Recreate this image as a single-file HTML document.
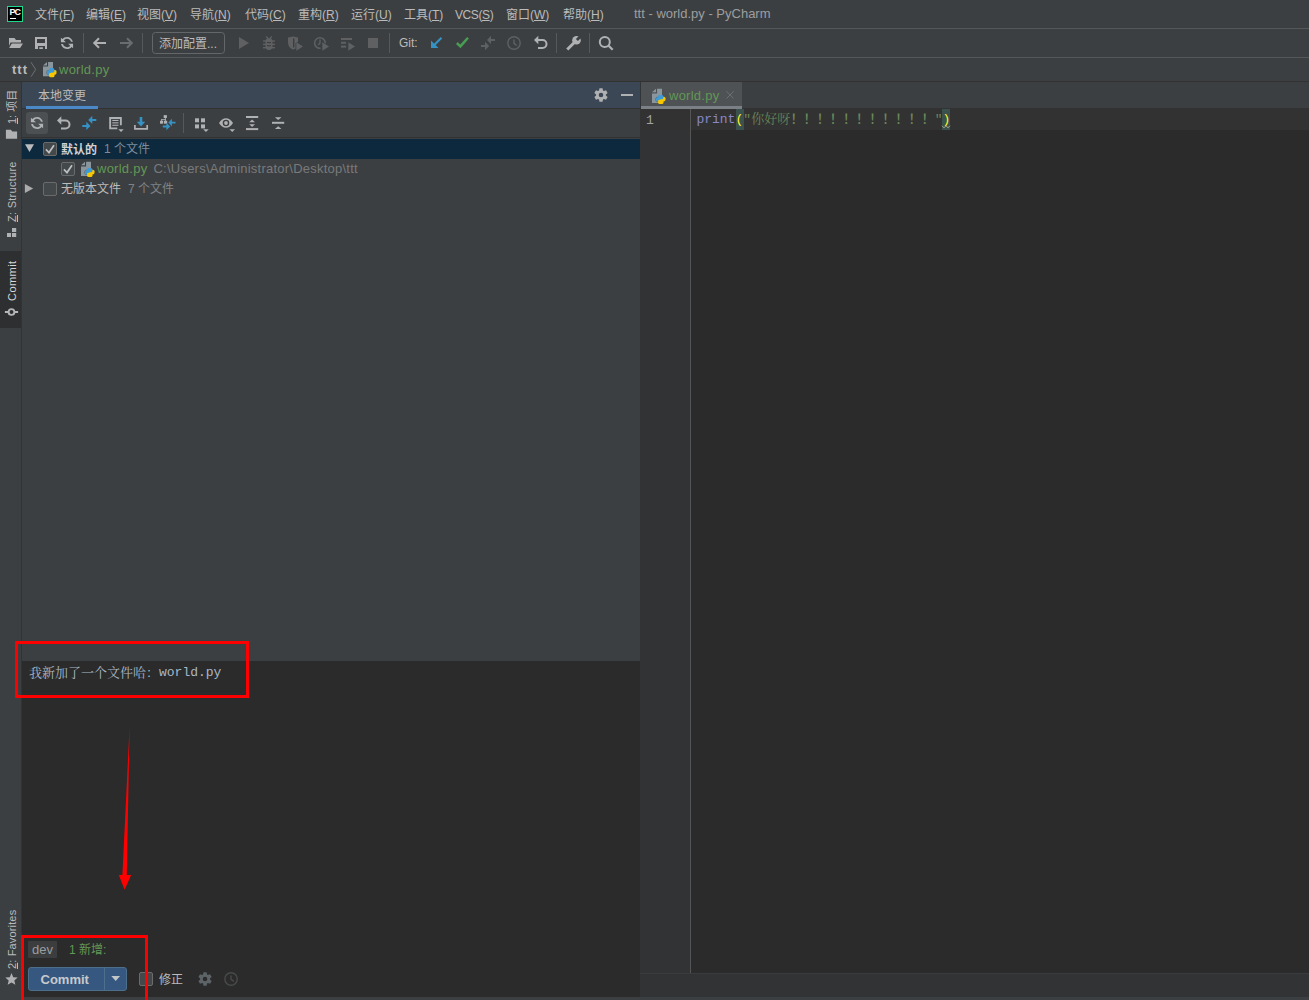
<!DOCTYPE html>
<html lang="zh">
<head>
<meta charset="utf-8">
<title>ttt - world.py - PyCharm</title>
<style>
*{box-sizing:border-box;margin:0;padding:0}
html,body{width:1309px;height:1000px;overflow:hidden;background:#3c3f41}
body{position:relative;font-family:"Liberation Sans","Noto Sans CJK SC",sans-serif;font-size:12px;color:#bbbbbb;line-height:1}
.abs{position:absolute}
.t{position:absolute;white-space:nowrap;line-height:16px;height:16px}
.hl{position:absolute;left:0;width:1309px;height:1px}
.vl{position:absolute;width:1px;background:#555759}
svg{position:absolute;overflow:visible}
u{text-decoration:underline;text-underline-offset:1px}
.vt u{text-underline-offset:1px}
.mono{font-family:"Liberation Mono","Noto Serif CJK SC",monospace}
.g{color:#629755}
.dim{color:#7f8385}
.vt{position:absolute;white-space:nowrap;transform-origin:0 0;transform:rotate(-90deg);line-height:14px;height:14px;font-size:11px;color:#bbbbbb}
.cb{position:absolute;width:14px;height:14px;border:1px solid #6b6b6b;background:#43494a;border-radius:2px}
</style>
</head>
<body>
<svg width="0" height="0" style="left:0;top:0"><defs>
<symbol id="py" viewBox="0 0 14 16" overflow="visible">
<path fill="#8a969e" d="M4 0v3.500h-4z M5.100 0h4.900v14.200h-10v-9.600h5.100z"/>
<g stroke="#3a3e40" stroke-width=".6" paint-order="stroke">
<rect fill="#3d9bd6" x="3.900" y="8.500" width="4.800" height="4.200" rx="1.500"/>
<rect fill="#f8c700" x="9" y="8" width="4.500" height="4.500" rx="1.500"/>
</g>
<rect fill="#3d9bd6" x="6" y="6.100" width="5.400" height="4.700" rx="1.600"/>
<rect fill="#f8c700" x="6.100" y="10.700" width="5.400" height="4.600" rx="1.600"/>
<rect fill="#3d9bd6" x="5" y="8.700" width="4.500" height="2.100"/>
<rect fill="#f8c700" x="8" y="10.700" width="4.500" height="1.700"/>
</symbol>
</defs></svg>
<!-- ===== menu bar ===== -->
<div id="menubar" class="abs" style="left:0;top:0;width:1309px;height:28px">
<div class="abs" style="left:7px;top:6px;width:16px;height:16px;background:#000;border:1px solid #21d789"></div>
<div class="t" style="left:9.500px;top:7px;font-size:9px;font-weight:bold;color:#fff;line-height:10px;height:10px;letter-spacing:-.9px">PC</div>
<div class="abs" style="left:10px;top:18px;width:6px;height:1px;background:#fff"></div>
<div class="t m" style="left:35px;top:7px">文件(<u>F</u>)</div>
<div class="t m" style="left:86px;top:7px">编辑(<u>E</u>)</div>
<div class="t m" style="left:137px;top:7px">视图(<u>V</u>)</div>
<div class="t m" style="left:190px;top:7px">导航(<u>N</u>)</div>
<div class="t m" style="left:245px;top:7px">代码(<u>C</u>)</div>
<div class="t m" style="left:298px;top:7px">重构(<u>R</u>)</div>
<div class="t m" style="left:351px;top:7px">运行(<u>U</u>)</div>
<div class="t m" style="left:404px;top:7px">工具(<u>T</u>)</div>
<div class="t m" style="left:455px;top:7px;letter-spacing:-.4px">VCS(<u>S</u>)</div>
<div class="t m" style="left:506px;top:7px">窗口(<u>W</u>)</div>
<div class="t m" style="left:563px;top:7px">帮助(<u>H</u>)</div>
<div class="t" style="left:634px;top:6px;color:#9c9ea0;font-size:13px">ttt - world.py - PyCharm</div>
</div>
<div class="hl" style="top:28px;background:#555759"></div>
<!-- ===== toolbar ===== -->
<div id="toolbar" class="abs" style="left:0;top:29px;width:1309px;height:28px">
<svg style="left:0;top:0" width="1309" height="28" viewBox="0 29 1309 28">
<!-- open folder -->
<path fill="#afb1b3" d="M9 38h5.5l1.5 2h5v2.5h-10.5l-1.5 3.5z M11.8 43.6h11.2l-2.9 4.4h-11z"/>
<!-- save -->
<path fill="#afb1b3" fill-rule="evenodd" d="M35 37h12v12h-12z M37 39v4h8v-4z M38 46v3h7v-3z M39.3 47.2h3.6v1.8h-3.6z"/>
<!-- refresh -->
<g transform="translate(59,35)"><path fill="#afb1b3" d="M12.57 11.89C11.47 13.18 9.83 14 8 14 5.04 14 2.58 11.86 2.09 9.04l1.86.07C4.43 10.89 6.06 12.2 8 12.2c1.3 0 2.46-.59 3.23-1.52L9.05 8.71h5.04v4.54z M3.43 4.12C4.53 2.82 6.17 2 8 2c2.92 0 5.35 2.09 5.89 4.85l-1.87-.06C11.5 5.06 9.9 3.8 8 3.8c-1.3 0-2.46.59-3.23 1.52L6.95 7.29H1.91V2.75z"/></g>
<!-- separators -->
<g fill="#56595b"><rect x="83" y="33" width="1" height="20"/><rect x="142" y="33" width="1" height="20"/><rect x="389" y="33" width="1" height="20"/><rect x="556" y="33" width="1" height="20"/><rect x="589" y="33" width="1" height="20"/></g>
<!-- back / forward -->
<path fill="none" stroke="#afb1b3" stroke-width="2" d="M99 38.2l-4.8 4.8 4.8 4.8M94.5 43h11.5"/>
<path fill="none" stroke="#6a6d6f" stroke-width="2" d="M127 38.2l4.8 4.8-4.8 4.8M131.500 43h-11.5"/>
<!-- run config button -->
<rect x="152.500" y="32.500" width="72" height="21" rx="3" fill="none" stroke="#646769"/>
<!-- play -->
<path fill="#5e6062" d="M239 37l10 6-10 6z"/>
<!-- bug -->
<g fill="#5e6062"><rect x="265.500" y="38.300" width="7" height="11.600" rx="3.400"/><path d="M265.600 36.800l1-.8 2.300 2.600-1 .8z M272.400 36.800l-1-.8-2.300 2.600 1 .8z"/><rect x="263" y="40.300" width="12" height="1.400"/><rect x="263" y="43.700" width="12" height="1.400"/><rect x="263" y="47" width="12" height="1.400"/></g>
<g fill="#3c3f41"><rect x="267" y="42" width="4" height="1.100"/><rect x="267" y="45.200" width="4" height="1.100"/></g>
<!-- coverage -->
<path fill="#5e6062" fill-rule="evenodd" d="M288 37.500l5-1 5 1v4.200l-2.500 1.500v5.300c-1 .6-1.700.9-2.500 1.100c-3-1-5-3.500-5-7z M293 38.300v9.400c.6-.2 1-.4 1.400-.7v-8.400z"/>
<path fill="#5e6062" d="M296.300 42.300l6.700 4.200-6.700 4.300z"/>
<!-- profile -->
<path fill="none" stroke="#5e6062" stroke-width="1.500" d="M320.500 48.300a5.300 5.300 0 1 1 4.700-5"/>
<path fill="none" stroke="#5e6062" stroke-width="1.300" d="M320 39.500v3.500l-1.800 2"/>
<path fill="#5e6062" d="M322.300 42.300l6.700 4.200-6.700 4.300z"/>
<!-- run list -->
<g fill="#5e6062"><rect x="341" y="38" width="11" height="2"/><rect x="341" y="41.800" width="5" height="2"/><rect x="341" y="45.600" width="5" height="2"/><path d="M348.300 42.300l6.700 4.200-6.700 4.300z"/></g>
<!-- stop -->
<rect x="368" y="38" width="10" height="10" fill="#5e6062"/>
<!-- git update (blue arrow) -->
<path fill="none" stroke="#3592c4" stroke-width="2" d="M441.500 37.700l-9.300 9.300"/><path fill="#3592c4" d="M431 40.500v7.500h7.500z"/>
<!-- git commit (check) -->
<path fill="none" stroke="#499c54" stroke-width="2.500" d="M456.900 43l3.500 3.400 7.600-8.700"/>
<!-- diff disabled -->
<path fill="#5e6062" d="M487 40l4-4.200v3.200h4v2h-4v3.200z M489.200 46l-4.200-4.200v3.200h-4v2h4v3.200z"/>
<!-- history disabled -->
<circle cx="514" cy="43" r="6.200" fill="none" stroke="#5e6062" stroke-width="1.400"/><path fill="none" stroke="#5e6062" stroke-width="1.400" d="M514 39.500v3.800l2.700 2.200"/>
<!-- rollback -->
<path fill="none" stroke="#afb1b3" stroke-width="2" d="M538 40h4.500a4 4 0 0 1 0 8h-4.500"/><path fill="#afb1b3" d="M534 40l4.300-4.200v8.400z"/>
<!-- wrench -->
<path stroke="#afb1b3" stroke-width="3" stroke-linecap="square" d="M568.300 48.500l6-6"/><circle cx="576.500" cy="40.300" r="4.300" fill="#afb1b3"/><path fill="#3c3f41" d="M575.900 38.900l2 2 4-4-2-2z"/>
<!-- search -->
<circle cx="604.800" cy="41.900" r="5" fill="none" stroke="#afb1b3" stroke-width="2"/><path stroke="#afb1b3" stroke-width="2.200" d="M608.400 45.500l4.300 4.300"/>
</svg>
<div class="t" style="left:159px;top:7px">添加配置...</div>
<div class="t" style="left:399px;top:6px">Git:</div>
</div>
<div class="hl" style="top:57px;background:#555759"></div>
<!-- ===== nav bar ===== -->
<div id="navbar" class="abs" style="left:0;top:58px;width:1309px;height:23px">
<div class="t" style="left:12px;top:4px;font-weight:bold;font-size:13px;letter-spacing:1px">ttt</div>
<svg style="left:0;top:0" width="120" height="23" viewBox="0 58 120 23"><path fill="none" stroke="#6e7173" stroke-width="1" d="M31 62.300l4.700 7.200-4.700 7.200"/><use href="#py" x="43" y="62" width="14" height="16"/></svg>
<div class="t g" style="left:59px;top:4px;font-size:13px;letter-spacing:.25px">world.py</div>
</div>
<div class="hl" style="top:81px;background:#323232"></div>
<!-- ===== left strip ===== -->
<div id="strip" class="abs" style="left:0;top:82px;width:21px;height:915px">
<div class="vt" style="left:5px;top:42px"><u>1</u>: 项目</div>
<div class="vt" style="left:5px;top:140px;letter-spacing:.27px"><u>Z</u>: Structure</div>
<div class="abs" style="left:0;top:169px;width:21px;height:77px;background:#2d2f30"></div>
<div class="vt" style="left:5px;top:219px;letter-spacing:.45px;color:#d6d6d6">Commit</div>
<div class="vt" style="left:5px;top:887px;letter-spacing:.15px"><u>2</u>: Favorites</div>
<svg style="left:0;top:0" width="21" height="915" viewBox="0 82 21 915">
<path fill="#afb1b3" d="M5.900 129.800h5l1.400 1.800h4.800v7.200h-11.200z"/>
<g fill="#afb1b3"><rect x="12" y="228" width="4.200" height="4"/><rect x="7" y="233" width="4" height="4"/><rect x="12" y="233" width="4.200" height="4"/></g>
<circle cx="11.500" cy="312" r="2.900" fill="none" stroke="#b4b6b8" stroke-width="1.900"/><path stroke="#b4b6b8" stroke-width="1.900" d="M4.900 312h3.600M14.500 312h3.600"/>
<path fill="#afb1b3" d="M11.500 973l1.750 4.200 4.450.35-3.400 2.900 1.050 4.350-3.850-2.350-3.850 2.350 1.050-4.350-3.400-2.900 4.450-.35z"/>
</svg>
</div>
<div class="abs" style="left:21px;top:82px;width:1px;height:915px;background:#313436"></div>
<!-- ===== commit tool window ===== -->
<div id="tw" class="abs" style="left:22px;top:82px;width:618px;height:915px">
<!-- header -->
<div class="abs" style="left:0;top:0;width:618px;height:26px;background:#3b4754"></div>
<div class="abs" style="left:0;top:26px;width:618px;height:1px;background:#323232"></div>
<div class="abs" style="left:4px;top:24px;width:72px;height:3px;background:#4a88c7"></div>
<div class="t" style="left:16px;top:6px">本地变更</div>
<!-- toolbar -->
<div class="abs" style="left:4px;top:30px;width:22px;height:22px;border-radius:3px;background:#4c5052"></div>
<div class="abs" style="left:0;top:55px;width:618px;height:1px;background:#323232"></div>
<svg style="left:0;top:0" width="618" height="60" viewBox="22 82 618 60">
<!-- gear -->
<g transform="translate(601,95)"><path fill="#afb1b3" fill-rule="evenodd" d="M-1.99 -4.48L-1.55 -6.72L1.55 -6.72L1.99 -4.48L2.88 -3.96L5.05 -4.71L6.60 -2.02L4.87 -0.51L4.87 0.51L6.60 2.02L5.05 4.71L2.88 3.96L1.99 4.48L1.55 6.72L-1.55 6.72L-1.99 4.48L-2.88 3.96L-5.05 4.71L-6.60 2.02L-4.87 0.51L-4.87 -0.51L-6.60 -2.02L-5.05 -4.71L-2.88 -3.96z M0 -2.30a2.30 2.30 0 1 0 0 4.60a2.30 2.30 0 1 0 0 -4.60z"/></g>
<rect x="621" y="94" width="12" height="2" fill="#afb1b3"/>
<!-- refresh -->
<g transform="translate(29,115)"><path fill="#afb1b3" d="M12.570 11.890C11.470 13.180 9.830 14 8 14 5.040 14 2.580 11.860 2.090 9.040l1.860.07C4.430 10.890 6.060 12.200 8 12.200c1.300 0 2.460-.59 3.230-1.520L9.050 8.710h5.040v4.540z M3.430 4.120C4.530 2.820 6.170 2 8 2c2.920 0 5.350 2.090 5.890 4.850l-1.870-.06C11.500 5.060 9.900 3.800 8 3.800c-1.300 0-2.460.59-3.230 1.520L6.950 7.290H1.910V2.750z"/></g>
<!-- rollback -->
<g transform="translate(-477,80.500)"><path fill="none" stroke="#afb1b3" stroke-width="2" d="M538 40h4.500a4 4 0 0 1 0 8h-4.500"/><path fill="#afb1b3" d="M534 40l4.300-4.200v8.400z"/></g>
<!-- diff -->
<g transform="translate(-398.700,79.900)"><path fill="#3592c4" d="M487 40l4-4.200v3.200h4v2h-4v3.200z M489.200 46l-4.200-4.200v3.200h-4v2h4v3.200z"/></g>
<!-- preview diff -->
<path fill="none" stroke="#afb1b3" stroke-width="1.900" d="M117.300 128.350h-7.150v-10.400h10.700v7.400"/><g fill="#afb1b3"><rect x="112.300" y="119.900" width="6.200" height="1.100"/><rect x="112.300" y="122.300" width="6.200" height="1.100"/><rect x="112.300" y="124.700" width="6.200" height="1.100"/></g><path fill="#afb1b3" d="M118.300 129.300h5.400l-2.700 2.700z"/>
<!-- download -->
<path fill="#3592c4" d="M139.700 117h2.600v4.800h2.900l-4.200 4.700-4.200-4.700h2.900z"/><path fill="none" stroke="#afb1b3" stroke-width="1.700" d="M134.900 125v3.800h12.300v-3.800"/>
<!-- shelve -->
<g fill="#afb1b3"><rect x="163.700" y="115.100" width="3.200" height="2.900"/><rect x="160" y="120.800" width="3.200" height="2.900"/><rect x="164" y="120.800" width="3.200" height="2.900"/><rect x="164.900" y="117.500" width=".9" height="3.500"/><rect x="161.200" y="119.200" width="4.600" height=".9"/><rect x="161.200" y="119.200" width=".9" height="2"/></g>
<g transform="translate(168.300,122.600) scale(.9)"><path fill="#3592c4" d="M0 0l4-4.200v3.200h4v2h-4v3.200z"/></g>
<g transform="translate(170.200,126.500) scale(.9)"><path fill="#3592c4" d="M0 0l-4.200-4.200v3.200h-4v2h4v3.200z"/></g>
<rect x="183" y="113" width="1" height="20" fill="#56595b"/>
<!-- group by -->
<g fill="#afb1b3"><rect x="195" y="118.300" width="4" height="4"/><rect x="201" y="118.300" width="4" height="4"/><rect x="195" y="124.400" width="4" height="4"/><rect x="201" y="124.400" width="4" height="4"/><path d="M203.200 129.300h5.500l-2.750 2.700z"/></g>
<!-- eye -->
<path fill="#afb1b3" fill-rule="evenodd" d="M219 123c1.800-3 4.300-4.700 7-4.700s5.200 1.700 7 4.700c-1.800 3-4.300 4.700-7 4.700s-5.200-1.700-7-4.700z M226 119.700a3.300 3.300 0 1 0 0 6.600a3.300 3.300 0 1 0 0-6.600z"/><circle cx="226" cy="123" r="1.900" fill="#afb1b3"/><path fill="#afb1b3" d="M229.500 129.300h5.500l-2.750 2.700z"/>
<!-- expand all -->
<g fill="#afb1b3"><rect x="246" y="116" width="12.200" height="2"/><rect x="246" y="128.100" width="12.200" height="2"/><path d="M249.200 122.300l2.900-2.800 2.900 2.800z M249.200 124.200l2.900 2.800 2.900-2.800z"/></g>
<!-- collapse all -->
<g fill="#afb1b3"><rect x="272" y="121.800" width="12.200" height="2"/><path d="M274.900 117.200h6.600l-3.300 2.800z M274.900 129.100h6.600l-3.300-2.800z"/></g>
</svg>

<!-- tree -->
<div class="abs" style="left:0;top:57px;width:618px;height:20px;background:#0d293e"></div>
<svg style="left:0;top:57px" width="80" height="60" viewBox="22 139 80 60">
<path fill="#b9bbbd" d="M25 144.300h9l-4.500 7.700z"/>
<path fill="#a9abad" d="M24.900 183.900l8.300 4.550-8.300 4.550z"/>
<use href="#py" x="81" y="161.800" width="14" height="16"/>
</svg>
<div class="cb" style="left:21px;top:60px"></div>
<div class="cb" style="left:39px;top:80px"></div>
<div class="cb" style="left:21px;top:100px"></div>
<svg style="left:0;top:57px" width="80" height="60" viewBox="22 139 80 60"><path fill="none" stroke="#bec0c2" stroke-width="1.700" d="M45.900 149.400l3.100 3.200 5-7.300M63.900 169.400l3.100 3.200 5-7.300"/></svg>
<div class="t" style="left:39px;top:60px;font-weight:bold;color:#d0d2d4">默认的</div>
<div class="t" style="left:82px;top:59px;color:#7e8c99">1 个文件</div>
<div class="t g" style="left:75px;top:79px;font-size:13px;letter-spacing:.25px">world.py</div>
<div class="t" style="left:131.500px;top:79px;color:#787a7c;font-size:13px;letter-spacing:.23px">C:\Users\Administrator\Desktop\ttt</div>
<div class="t" style="left:39px;top:99px">无版本文件</div>
<div class="t" style="left:106px;top:99px;color:#808385">7 个文件</div>
<!-- commit message -->
<div class="abs" style="left:0;top:579px;width:618px;height:336px;background:#2b2b2b"></div>
<div class="t mono" style="left:7px;top:583px;font-size:13px;color:#a9b7c6;line-height:18px;height:18px">我新加了一个文件哈：<span style="position:relative;top:-1px">world.py</span></div>
<!-- bottom -->
<div class="abs" style="left:6px;top:859px;width:29px;height:17px;background:#3b3d3e;border-radius:1px"></div>
<div class="t" style="left:10px;top:860px;color:#9a9da0;font-size:13px">dev</div>
<div class="t g" style="left:47px;top:860px">1 新增:</div>
<div class="abs" style="left:6px;top:885px;width:99px;height:24px;background:#365880;border:1px solid #4c708c;border-radius:3px"></div>
<div class="abs" style="left:82px;top:886px;width:1px;height:22px;background:#4c708c"></div>
<div class="t" style="left:18.500px;top:890px;font-weight:bold;font-size:13px;color:#c8cacc">Commit</div>
<div class="cb" style="left:117px;top:890px"></div>
<div class="t" style="left:137px;top:890px">修正</div>
<svg style="left:0;top:880px" width="300" height="35" viewBox="22 962 300 35">
<path fill="#c3c6c9" d="M111.300 976h8.800l-4.400 5z"/>
<g transform="translate(205.050,979)"><path fill="#5c6468" fill-rule="evenodd" d="M-1.99 -4.48L-1.55 -6.72L1.55 -6.72L1.99 -4.48L2.88 -3.96L5.05 -4.71L6.60 -2.02L4.87 -0.51L4.87 0.51L6.60 2.02L5.05 4.71L2.88 3.96L1.99 4.48L1.55 6.72L-1.55 6.72L-1.99 4.48L-2.88 3.96L-5.05 4.71L-6.60 2.02L-4.87 0.51L-4.87 -0.51L-6.60 -2.02L-5.05 -4.71L-2.88 -3.96z M0 -2.30a2.30 2.30 0 1 0 0 4.60a2.30 2.30 0 1 0 0 -4.60z"/></g>
<circle cx="231.050" cy="979" r="6.200" fill="none" stroke="#484a4b" stroke-width="1.400"/><path fill="none" stroke="#484a4b" stroke-width="1.400" d="M231 975.500v3.800l3 2"/>
</svg>

</div>
<!-- ===== editor ===== -->
<div id="editor" class="abs" style="left:640px;top:82px;width:669px;height:915px">
<!-- editor body -->
<div class="abs" style="left:0;top:26px;width:669px;height:865px;background:#2b2b2b"></div>
<div class="abs" style="left:0;top:26px;width:50px;height:865px;background:#313335"></div>
<div class="abs" style="left:0;top:26px;width:669px;height:22px;background:#323232"></div>
<div class="abs" style="left:50px;top:26px;width:1px;height:865px;background:#555555"></div>
<!-- tab row -->
<div class="abs" style="left:0;top:0;width:1px;height:26px;background:#323537"></div>
<div class="abs" style="left:1px;top:0;width:101px;height:24px;background:#4e5254"></div>
<div class="abs" style="left:1px;top:24px;width:101px;height:3px;background:#7b8087"></div>
<svg style="left:0;top:0" width="110" height="27" viewBox="640 82 110 27"><use href="#py" x="652" y="88.800" width="14" height="16"/><path stroke="#6e7072" stroke-width="1" d="M726.500 91.300l7.200 7.200M733.700 91.300l-7.200 7.200"/></svg>
<div class="t g" style="left:29px;top:6px;font-size:13px;letter-spacing:.25px">world.py</div>
<div class="t mono" style="left:6px;top:30px;font-size:13px;color:#a4a3a3;line-height:18px;height:18px">1</div>
<div class="abs" style="left:95.500px;top:27px;width:8px;height:21px;background:#3b514d"></div>
<div class="abs" style="left:302.300px;top:27px;width:7.800px;height:21px;background:#3b514d"></div>
<div class="t mono" id="code" style="left:56.400px;top:29px;font-size:13px;color:#a9b7c6;line-height:18px;height:18px"><span style="color:#8888c6">print</span><span style="color:#ffef28">(</span><span style="color:#6a8759;letter-spacing:.11px">"你好呀<span style="font-family:'Noto Sans CJK SC',sans-serif;line-height:0;font-weight:500">！！！！！！！！！！！</span>"</span><span style="color:#ffef28">)</span></div>
<svg style="left:0;top:27px" width="669" height="30" viewBox="640 109 669 30"><path fill="none" stroke="#b5b08c" stroke-width=".9" d="M942 125.800l2 2 2-2 2 2 2-2"/></svg>
<!-- breadcrumbs bar -->
<div class="abs" style="left:0;top:891px;width:669px;height:24px;background:#313335"></div>
<div class="abs" style="left:0;top:891px;width:669px;height:1px;background:#393b3d"></div>
</div>
<!-- ===== status ===== -->
<div class="abs" style="left:0;top:997px;width:1309px;height:3px;background:#3c3f41"></div>
<!-- ===== annotations ===== -->
<div id="anno">
<div class="abs" style="left:15px;top:641px;width:234px;height:57px;border:3px solid #ff0000"></div>
<div class="abs" style="left:21px;top:935px;width:127px;height:70px;border:3px solid #ff0000"></div>
<svg style="left:0;top:0" width="300" height="1000" viewBox="0 0 300 1000"><path fill="#ff0000" d="M129.600 726.500L126.800 875h4.400L124.600 889.800L118.800 875h3.600z"/></svg>
</div>
</body>
</html>
